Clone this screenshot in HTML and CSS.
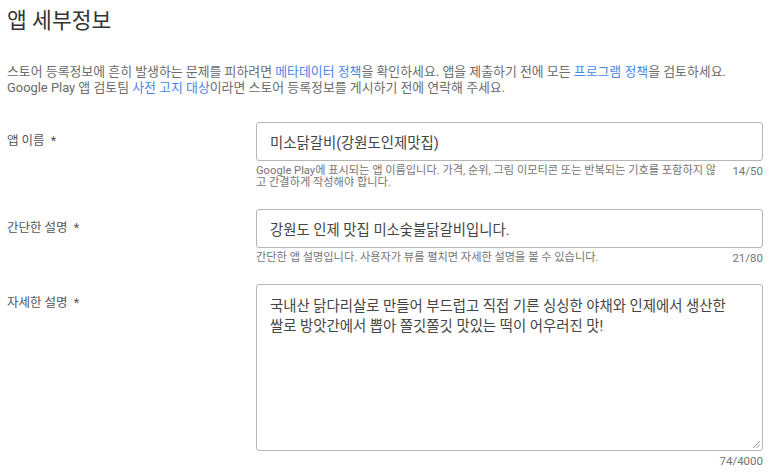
FILE: index.html
```html
<!DOCTYPE html>
<html lang="ko">
<head>
<meta charset="utf-8">
<link rel="stylesheet" href="styles.css">
</head>
<body>
<div class="page">
  <h1 class="title">앱 세부정보</h1>
  <p class="intro">스토어 등록정보에 흔히 발생하는 문제를 피하려면 <span class="link">메타데이터 정책</span>을 확인하세요. 앱을 제출하기 전에 모든 <span class="link">프로그램 정책</span>을 검토하세요.<br>Google Play 앱 검토팀 <span class="link">사전 고지 대상</span>이라면 스토어 등록정보를 게시하기 전에 연락해 주세요.</p>

  <div class="row">
    <div class="label">앱 이름 &nbsp;*</div>
    <div class="field">
      <div class="input">미소닭갈비(강원도인제맛집)</div>
      <div class="help">
        <span class="help-text">Google Play에 표시되는 앱 이름입니다. 가격, 순위, 그림 이모티콘 또는 반복되는 기호를 포함하지 않고 간결하게 작성해야 합니다.</span>
        <span class="count">14/50</span>
      </div>
    </div>
  </div>

  <div class="row">
    <div class="label">간단한 설명 &nbsp;*</div>
    <div class="field">
      <div class="input">강원도 인제 맛집 미소숯불닭갈비입니다.</div>
      <div class="help">
        <span class="help-text">간단한 앱 설명입니다. 사용자가 뷰를 펼치면 자세한 설명을 볼 수 있습니다.</span>
        <span class="count">21/80</span>
      </div>
    </div>
  </div>

  <div class="row">
    <div class="label">자세한 설명 &nbsp;*</div>
    <div class="field">
      <div class="textarea">국내산 닭다리살로 만들어 부드럽고 직접 기른 싱싱한 야채와 인제에서 생산한 쌀로 방앗간에서 뽑아 쫄깃쫄깃 맛있는 떡이 어우러진 맛!
        <svg class="grip" width="9" height="9" viewBox="0 0 9 9"><path d="M8 1 L1 8 M8 4.5 L4.5 8" stroke="#9a9a9a" stroke-width="1" fill="none"/></svg>
      </div>
      <div class="help">
        <span class="help-text"></span>
        <span class="count">74/4000</span>
      </div>
    </div>
  </div>
</div>
</body>
</html>
```

FILE: styles.css
```css
* { box-sizing: border-box; }
html, body { margin: 0; padding: 0; background: #fff; }
body {
  font-family: Roboto, "Noto Sans CJK KR", sans-serif;
  color: #5f5f5f;
}
.page {
  padding: 7px 10px 0 7px;
}
.title {
  margin: 0;
  font-size: 21.5px;
  line-height: 28px;
  font-weight: 400;
  color: #333;
}
.intro {
  margin: 29px 0 0;
  font-size: 12.9px;
  line-height: 16px;
  color: #6b6b6b;
}
.link { color: #4a86e8; }
.row {
  display: grid;
  grid-template-columns: 249px 1fr;
  margin-top: 26px;
}
.row + .row { margin-top: 20px; }
.label {
  padding-top: 10px;
  font-size: 12.5px;
  line-height: 18px;
  color: #555;
}
.input, .textarea {
  border: 1px solid #b5b5b5;
  border-radius: 3px;
  padding: 0 13px;
  font-size: 14.4px;
  color: #444;
}
.input {
  height: 39px;
  display: flex;
  align-items: center;
}
.textarea {
  position: relative;
  height: 167px;
  padding-top: 12px;
  line-height: 20px;
  padding-right: 20px;
}
.grip {
  position: absolute;
  right: 1px;
  bottom: 1px;
}
.help {
  display: flex;
  justify-content: space-between;
  margin-top: 4px;
  font-size: 11.2px;
  line-height: 12px;
  color: #757575;
}
.help-text { flex: 1; padding-right: 12px; }
.count { white-space: nowrap; font-size: 11.5px; }
```
